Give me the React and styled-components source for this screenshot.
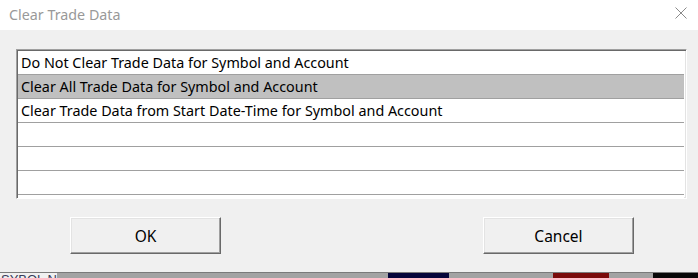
import React from "react";
import styled, { createGlobalStyle } from "styled-components";

const GlobalStyle = createGlobalStyle`
  html, body {
    margin: 0;
    padding: 0;
    width: 698px;
    height: 278px;
    overflow: hidden;
    background: #f0f0f0;
  }
`;

const options = [
  "Do Not Clear Trade Data for Symbol and Account",
  "Clear All Trade Data for Symbol and Account",
  "Clear Trade Data from Start Date-Time for Symbol and Account",
  "",
  "",
  "",
  "",
];

const App = () => {
  return (
    <>
      <GlobalStyle />
      <Window>
        <TitleBar>
          <Title>Clear Trade Data</Title>
          <CloseButton>
            <svg width="12" height="12" viewBox="0 0 12 12">
              <path d="M0.5 0.5 L11.5 11.5 M11.5 0.5 L0.5 11.5" stroke="#8a8a8a" strokeWidth="1" fill="none" />
            </svg>
          </CloseButton>
        </TitleBar>
        <Body>
          <ListBox>
            {options.map((text, i) => (
              <Row key={i} selected={i === 1}>
                {text}
              </Row>
            ))}
          </ListBox>
          <Buttons>
            <Button>OK</Button>
            <Button>Cancel</Button>
          </Buttons>
        </Body>
        <Desktop>
          <DesktopText>SYBOL N</DesktopText>
          <Swatch left={388} width={61} color="#05053a" />
          <Swatch left={553} width={56} color="#7a0a0a" />
          <Swatch left={653} width={45} color="#080808" />
        </Desktop>
      </Window>
    </>
  );
};

const Window = styled.div`
  width: 698px;
  height: 278px;
  display: flex;
  flex-direction: column;
  font-family: "Noto Sans", "Open Sans", sans-serif;
`;

const TitleBar = styled.div`
  height: 30px;
  background: #ffffff;
  display: flex;
  align-items: center;
  justify-content: space-between;
  padding: 0 11px 0 9px;
  flex-shrink: 0;
`;

const Title = styled.div`
  font-size: 14.3px;
  color: #999999;
  margin-top: -1px;
`;

const CloseButton = styled.div`
  display: flex;
  margin-top: -4px;
`;

const Body = styled.div`
  flex: 1;
  background: #f0f0f0;
  padding: 19px 11px 0 16px;
  display: flex;
  flex-direction: column;
`;

const ListBox = styled.div`
  height: 146px;
  background: #ffffff;
  border-top: 1px solid #a0a0a0;
  border-left: 1px solid #a0a0a0;
  border-right: 1px solid #ffffff;
  border-bottom: 1px solid #ffffff;
  box-shadow: inset 1px 1px 0 #696969, inset -1px -1px 0 #e3e3e3;
  padding: 1px 2px 1px 1px;
  overflow: hidden;
`;

const Row = styled.div`
  height: 23px;
  border-bottom: 1px solid #a0a0a0;
  background: ${(p) => (p.selected ? "#c0c0c0" : "#ffffff")};
  color: #000000;
  font-size: 14.35px;
  line-height: 23px;
  padding-left: 3px;
  white-space: nowrap;
`;

const Buttons = styled.div`
  display: flex;
  justify-content: space-between;
  padding: 18px 53px 0 54px;
`;

const Button = styled.button`
  width: 151px;
  height: 37px;
  background: #f0f0f0;
  border: none;
  border-top: 1px solid #ffffff;
  border-left: 1px solid #ffffff;
  border-right: 1px solid #696969;
  border-bottom: 1px solid #696969;
  box-shadow: inset -1px -1px 0 #a0a0a0, inset 1px 1px 0 #e3e3e3;
  font-family: "Noto Sans", "Open Sans", sans-serif;
  font-size: 15.5px;
  color: #000000;
  padding: 0;
`;

const Desktop = styled.div`
  position: relative;
  height: 5px;
  flex-shrink: 0;
  background: #a3a3a3;
  border-top: 1px solid #7a7a7a;
  overflow: hidden;
`;

const DesktopText = styled.div`
  position: absolute;
  left: 0;
  top: -1px;
  height: 6px;
  width: 56px;
  background: #f0f0f0;
  color: #3a3a5a;
  font-family: "Liberation Sans", sans-serif;
  font-size: 13px;
  line-height: 15px;
  overflow: hidden;
  padding-left: 1px;
`;

const Swatch = styled.div`
  position: absolute;
  top: 0;
  bottom: 0;
  left: ${(p) => p.left}px;
  width: ${(p) => p.width}px;
  background: ${(p) => p.color};
`;

export default App;
